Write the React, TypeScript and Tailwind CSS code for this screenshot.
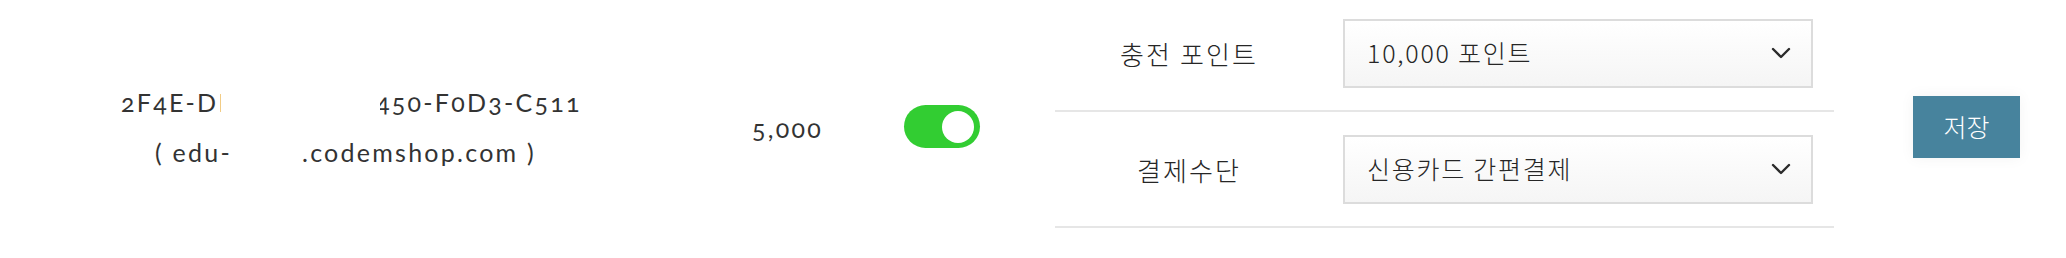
import React from 'react';

const latin = "font-['Lato','Noto_Sans_CJK_KR',sans-serif]";
const korean = "font-['Noto_Sans_CJK_KR',sans-serif]";

const Chevron = () => (
  <svg width="20" height="12" viewBox="0 0 20 12" fill="none">
    <polyline points="2,2 10,10 18,2" stroke="#2b2b2b" strokeWidth="2.4" strokeLinecap="round" strokeLinejoin="round" />
  </svg>
);

const FakeSelect = ({ value }: { value: string }) => (
  <div className={`${korean} flex h-[69px] w-[470px] items-center justify-between border-2 border-[#dcdcdc] bg-gradient-to-b from-white to-[#f5f5f5] pl-[22px] pr-[20px] text-[25px] font-light tracking-[0.07em] text-[#262626]`}>
    <span>{value}</span>
    <Chevron />
  </div>
);

const OptionRow = ({ label, value }: { label: string; value: string }) => (
  <div className="flex h-[116px] items-center border-b-2 border-[#e6e6e6]">
    <div className={`${korean} w-[268px] text-center text-[26px] font-light tracking-[0.08em] text-[#262626]`}>{label}</div>
    <div className="pl-[20px] pr-[21px]">
      <FakeSelect value={value} />
    </div>
  </div>
);

export default function App() {
  return (
    <div className="flex h-[258px] w-[2066px] overflow-hidden bg-white text-[#333]">
      {/* user id */}
      <div className={`${latin} -mt-[4px] flex w-[700px] flex-col items-center justify-center text-[25px] leading-[50px] tracking-[0.09em] oldstyle-nums`}>
        <div className="flex whitespace-pre">
          <span className="w-[100px] overflow-hidden">
            2F4E-D<span className="inline-block w-[7px] overflow-hidden align-bottom">F</span>
          </span>
          <span className="w-[159px]" />
          <span className="w-[199px] overflow-hidden">
            <span className="-ml-[4px]">450-F0D3-C511</span>
          </span>
        </div>
        <div className="flex whitespace-pre">
          <span className="w-[76px]">( edu-</span>
          <span className="w-[71px]" />
          <span className="w-[243px]">.codemshop.com )</span>
        </div>
      </div>

      {/* point */}
      <div className={`${latin} flex w-[175px] items-center justify-center text-[25px] tracking-[0.09em] oldstyle-nums`}>5,000</div>

      {/* toggle */}
      <div className="flex w-[134px] items-center justify-center">
        <div className="-mt-[5px] flex h-[43px] w-[76px] items-center justify-end rounded-full bg-[#32cd32] pr-[6px]">
          <div className="h-[32px] w-[32px] rounded-full bg-white" />
        </div>
      </div>

      {/* settings */}
      <div className="-mt-[4px] ml-[46px] flex w-[779px] flex-col self-start">
        <OptionRow label="충전 포인트" value="10,000 포인트" />
        <OptionRow label="결제수단" value="신용카드 간편결제" />
      </div>

      {/* save */}
      <div className="ml-[79px] flex items-center">
        <button className={`${korean} -mt-[4px] h-[62px] w-[107px] bg-[#47839d] text-[25px] font-light text-white shadow-[0_0_14px_rgba(0,0,0,0.05)]`}>
          저장
        </button>
      </div>
    </div>
  );
}
